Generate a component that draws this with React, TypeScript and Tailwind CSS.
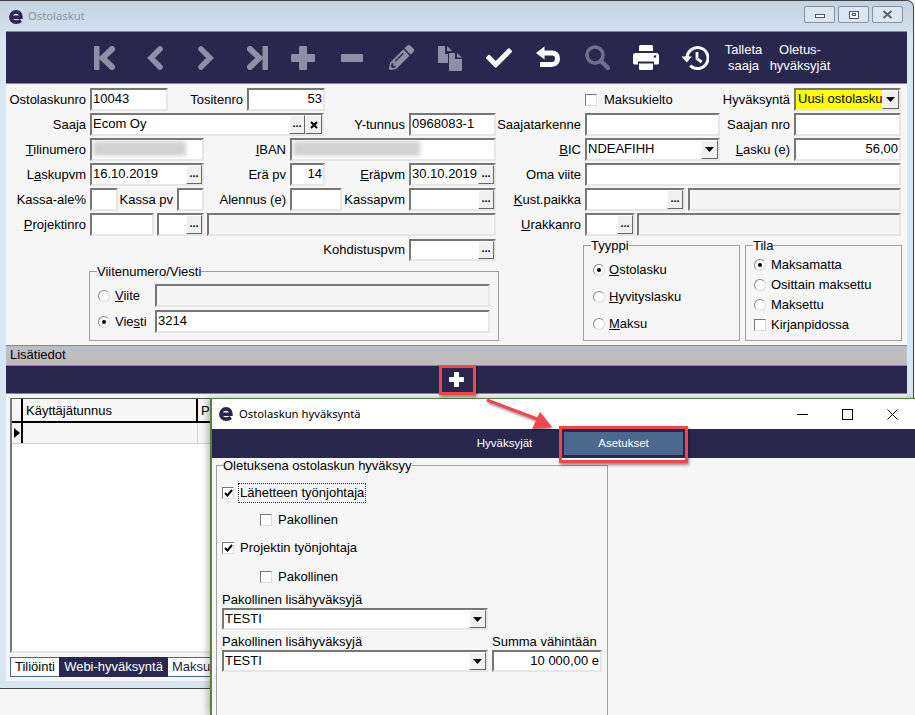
import React from 'react';
import { FaPencilAlt, FaCheck } from 'react-icons/fa';

const sunken = 'border-2 border-t-[#777777] border-l-[#777777] border-r-[#e6e6e6] border-b-[#e6e6e6]';

const Lbl: React.FC<{ className?: string; children?: React.ReactNode }> = ({ className = '', children }) => (
  <div className={`shrink-0 text-right pr-[4px] whitespace-nowrap ${className}`}>{children}</div>
);

const DotsBtn = () => (
  <div className="w-[16px] shrink-0 h-full bg-[#f0f0f0] border border-t-white border-l-white border-r-[#666666] border-b-[#666666] flex items-center justify-center text-[11px] font-bold leading-none pb-[3px]">
    ...
  </div>
);

const CloseBtn = () => (
  <div className="w-[17px] shrink-0 h-full bg-[#f0f0f0] border border-t-white border-l-white border-r-[#666666] border-b-[#666666] flex items-center justify-center">
    <svg width="8" height="8" viewBox="0 0 8 8"><path d="M1 1 L7 7 M7 1 L1 7" stroke="#000" strokeWidth="2" /></svg>
  </div>
);

const ArrowBtn = () => (
  <div className="w-[17px] shrink-0 h-full bg-[#f0f0f0] border border-t-white border-l-white border-r-[#666666] border-b-[#666666] flex items-center justify-center">
    <svg width="9" height="5" viewBox="0 0 9 5"><path d="M0 0 H9 L4.5 5 Z" fill="#000" /></svg>
  </div>
);

const Inp: React.FC<{
  className?: string;
  inner?: string;
  disabled?: boolean;
  right?: boolean;
  children?: React.ReactNode;
  after?: React.ReactNode;
}> = ({ className = '', inner = '', disabled, right, children, after }) => (
  <div className={`flex shrink-0 ${sunken} ${disabled ? 'bg-[#f5f5f5]' : 'bg-white'} ${className}`}>
    <div className={`flex-1 min-w-0 whitespace-nowrap overflow-hidden leading-[17px] ${right ? 'text-right pr-[1px]' : 'pl-[1px]'} ${inner}`}>
      {children}
    </div>
    {after}
  </div>
);

const Blur: React.FC<{ className: string }> = ({ className }) => (
  <div className={`mt-[1px] h-[15px] bg-[#d2d2d2] blur-[2px] ${className}`} />
);

const Radio: React.FC<{ on?: boolean }> = ({ on }) => (
  <div className="w-[12px] h-[12px] shrink-0 rounded-full bg-white border border-t-[#8a8a8a] border-l-[#8a8a8a] border-r-[#dddddd] border-b-[#dddddd] flex items-center justify-center">
    {on && <div className="w-[4px] h-[4px] rounded-full bg-black" />}
  </div>
);

const Check: React.FC<{ on?: boolean }> = ({ on }) => (
  <div className="w-[12px] h-[12px] shrink-0 bg-white border border-t-[#777777] border-l-[#777777] border-r-[#dddddd] border-b-[#dddddd] flex items-center justify-center">
    {on && (
      <svg width="9" height="8" viewBox="0 0 9 8"><path d="M1 4 L3.5 6.5 L8 1" fill="none" stroke="#000" strokeWidth="2" /></svg>
    )}
  </div>
);

const Logo: React.FC<{ className?: string }> = ({ className = '' }) => (
  <svg className={className} viewBox="0 0 14 14">
    <path d="M2.2 7.2 H11.9 C11.9 3.6 9.9 1.9 7.1 1.9 C3.9 1.9 1.9 4.2 1.9 7 C1.9 10 3.9 12.1 7.1 12.1 C8.9 12.1 10.4 11.6 11.9 10.5" fill="none" stroke="#2a274f" strokeWidth="3.6" />
  </svg>
);

const off = '#8f8fa8';

const FirstIcon = () => (
  <svg width="21" height="24" viewBox="0 0 21 24">
    <rect x="0" y="0" width="5.5" height="24" rx="1" fill={off} />
    <path d="M18 3 L8.5 12 L18 21" fill="none" stroke={off} strokeWidth="6" strokeLinecap="round" />
  </svg>
);
const LastIcon = () => (
  <svg width="21" height="24" viewBox="0 0 21 24">
    <rect x="15.5" y="0" width="5.5" height="24" rx="1" fill={off} />
    <path d="M3 3 L12.5 12 L3 21" fill="none" stroke={off} strokeWidth="6" strokeLinecap="round" />
  </svg>
);
const PrevIcon = () => (
  <svg width="16" height="24" viewBox="0 0 16 24"><path d="M13 3 L4 12 L13 21" fill="none" stroke={off} strokeWidth="5.5" strokeLinecap="round" /></svg>
);
const NextIcon = () => (
  <svg width="16" height="24" viewBox="0 0 16 24"><path d="M3 3 L12 12 L3 21" fill="none" stroke={off} strokeWidth="5.5" strokeLinecap="round" /></svg>
);
const PlusIcon: React.FC<{ size?: number; color?: string }> = ({ size = 24, color = off }) => (
  <svg width={size} height={size} viewBox="0 0 24 24" fill={color}>
    <rect x="8" y="0" width="8" height="24" rx="1.2" />
    <rect x="0" y="8" width="24" height="8" rx="1.2" />
  </svg>
);
const MinusIcon = () => (
  <svg width="22" height="8" viewBox="0 0 22 8"><rect width="22" height="8" rx="1.2" fill={off} /></svg>
);
const CopyIcon = () => (
  <svg width="26" height="26" viewBox="0 0 26 26" fill={off}>
    <path d="M1 1 H8 V9 H11 V18 H1 Z" />
    <path d="M10 1 L15 6 H10 Z" />
    <path d="M12 8 H18 V14 H25 V26 H12 Z" />
    <path d="M20 8 L25 12.5 H20 Z" />
  </svg>
);
const UndoIcon = () => (
  <svg width="26" height="24" viewBox="0 0 26 24" fill="none" stroke="#fff">
    <path d="M7 7 H17 C20.5 7 22.5 9.4 22.5 12.5 C22.5 15.6 20.5 18.5 17 18.5 H5" strokeWidth="5" />
    <path d="M9.5 0.5 V13.5 L1 7 Z" fill="#fff" stroke="none" />
  </svg>
);
const SearchIcon = () => (
  <svg width="25" height="25" viewBox="0 0 25 25" fill="none" stroke="#6f6f8c">
    <circle cx="10" cy="10" r="8" strokeWidth="3.6" />
    <path d="M16 16 L23 23" strokeWidth="4.4" strokeLinecap="round" />
  </svg>
);
const PrintIcon = () => (
  <svg width="26" height="25" viewBox="0 0 26 25" fill="#fff">
    <path d="M6 1.5 A1.5 1.5 0 0 1 7.5 0 H18.5 A1.5 1.5 0 0 1 20 1.5 V6 H6 Z" />
    <path d="M2.5 8 H23.5 A2.5 2.5 0 0 1 26 10.5 V18 A1.5 1.5 0 0 1 24.5 19.5 H21 V16.5 H5 V19.5 H1.5 A1.5 1.5 0 0 1 0 18 V10.5 A2.5 2.5 0 0 1 2.5 8 Z" />
    <path d="M6 18.5 H20 V23.5 A1.5 1.5 0 0 1 18.5 25 H7.5 A1.5 1.5 0 0 1 6 23.5 Z" />
    <circle cx="22" cy="11.5" r="1.2" fill="#2a274f" />
  </svg>
);
const HistoryIcon = () => (
  <svg width="28" height="24" viewBox="0 0 28 24" fill="none" stroke="#fff">
    <path d="M6 12 A10.5 10.5 0 1 1 9.2 19.6" strokeWidth="3" />
    <path d="M0.5 10.5 H11 L5.8 16.5 Z" fill="#fff" stroke="none" />
    <path d="M16 6 V12.6 L20.6 16" strokeWidth="2.8" />
  </svg>
);

const navTools: React.ReactNode[] = [<FirstIcon />, <PrevIcon />, <NextIcon />, <LastIcon />];
const tools: React.ReactNode[] = [
  <PlusIcon />,
  <MinusIcon />,
  <FaPencilAlt size={25} color={off} />,
  <CopyIcon />,
  <FaCheck size={26} color="#fff" />,
  <UndoIcon />,
  <SearchIcon />,
  <PrintIcon />,
  <HistoryIcon />,
];

export default function App() {
  return (
    <div className="relative w-[915px] h-[715px] overflow-hidden bg-[#f6f6f6] text-[13px] text-black font-['Liberation_Sans',sans-serif]">
      {/* main window */}
      <div className="w-[914px] h-[689px] flex flex-col border-t border-r border-b border-[#444444] rounded-tr-[7px] pl-[6px] pr-[6px] pb-[7px] bg-gradient-to-b from-[#c3d3e2] to-[#d8e5f2] to-[6%]">
        <div className="h-[30px] shrink-0 flex items-center -ml-[6px] pl-[9px]">
          <Logo className="w-[14px] h-[14px] mt-[1px]" />
          <span className="ml-[5px] mt-[1px] text-[11.25px] text-[#8a97a3] font-['Noto_Sans',sans-serif]">Ostolaskut</span>
          <div className="ml-auto flex gap-[3px] mr-[4px] -mt-[3px]">
            <div className="w-[31px] h-[17px] border border-[#7f94a9] rounded-[2px] bg-[#dbe6f0] flex items-center justify-center">
              <div className="w-[10px] h-[4px] mt-[3px] bg-[#f4f7fa] border border-[#4a5a6a]" />
            </div>
            <div className="w-[31px] h-[17px] border border-[#7f94a9] rounded-[2px] bg-[#dbe6f0] flex items-center justify-center">
              <div className="w-[10px] h-[8px] bg-[#f4f7fa] border border-[#4a5a6a] flex items-center justify-center"><div className="w-[4px] h-[3px] border border-[#4a5a6a]" /></div>
            </div>
            <div className="w-[31px] h-[17px] border border-[#7f94a9] rounded-[2px] bg-[#dbe6f0] flex items-center justify-center">
              <svg width="11" height="9" viewBox="0 0 11 9"><path d="M1.5 1 L9.5 8 M9.5 1 L1.5 8" stroke="#5a6a7a" strokeWidth="2.2" /></svg>
            </div>
          </div>
        </div>

        {/* toolbar */}
        <div className="h-[53px] shrink-0 bg-[#2a274f] border-t border-b border-[#6d8fb0] flex items-center pl-[72.5px] text-white text-[13px] leading-[16px]">
          {navTools.map((t, i) => (
            <div key={i} className="w-[51px] shrink-0 flex items-center justify-center">{t}</div>
          ))}
          <div className="flex shrink-0 -ml-[4px]">
            {tools.map((t, i) => (
              <div key={i} className="w-[49px] shrink-0 flex items-center justify-center">{t}</div>
            ))}
          </div>
          <div className="w-[48px] shrink-0 flex flex-col items-center"><span>Talleta</span><span>saaja</span></div>
          <div className="w-[65px] shrink-0 flex flex-col items-center"><span>Oletus-</span><span className="whitespace-nowrap">hyväksyjät</span></div>
        </div>

        {/* form */}
        <div className="h-[261px] shrink-0 bg-[#f6f6f6] pt-[4px] flex flex-col gap-[2px]">
          <div className="flex items-center h-[23px]">
            <Lbl className="w-[84px]">Ostolaskunro</Lbl>
            <Inp className="w-[78px] h-[23px]">10043</Inp>
            <Lbl className="w-[79px]">Tositenro</Lbl>
            <Inp className="w-[78px] h-[23px]" right>53</Inp>
            <div className="w-[260px] shrink-0" />
            <div className="w-[209px] shrink-0 flex items-center">
              <Check />
              <span className="ml-[7px]">Maksukielto</span>
              <Lbl className="flex-1">Hyväksyntä</Lbl>
            </div>
            <Inp className="w-[107px] h-[23px]" inner="bg-[#ffff00] pl-[2px]" after={<ArrowBtn />}>Uusi ostolasku</Inp>
          </div>

          <div className="flex items-center h-[23px]">
            <Lbl className="w-[84px]">Saaja</Lbl>
            <Inp className="w-[234px] h-[23px]" after={<><DotsBtn /><CloseBtn /></>}>Ecom Oy</Inp>
            <Lbl className="w-[85px]">Y-tunnus</Lbl>
            <Inp className="w-[87px] h-[23px]">0968083-1</Inp>
            <Lbl className="w-[89px]">Saajatarkenne</Lbl>
            <Inp className="w-[135px] h-[23px]" />
            <Lbl className="w-[74px]">Saajan nro</Lbl>
            <Inp className="w-[107px] h-[23px]" />
          </div>

          <div className="flex items-center h-[23px]">
            <Lbl className="w-[84px]"><u>T</u>ilinumero</Lbl>
            <Inp className="w-[114px] h-[23px]"><Blur className="w-[93px]" /></Inp>
            <Lbl className="w-[86px]"><u>I</u>BAN</Lbl>
            <Inp className="w-[206px] h-[23px]"><Blur className="w-[127px]" /></Inp>
            <Lbl className="w-[89px]"><u>B</u>IC</Lbl>
            <Inp className="w-[135px] h-[23px]" after={<ArrowBtn />}>NDEAFIHH</Inp>
            <Lbl className="w-[74px]"><u>L</u>asku (e)</Lbl>
            <Inp className="w-[107px] h-[23px]" right>56,00</Inp>
          </div>

          <div className="flex items-center h-[23px]">
            <Lbl className="w-[84px]">L<u>a</u>skupvm</Lbl>
            <Inp className="w-[114px] h-[23px]" after={<DotsBtn />}>16.10.2019</Inp>
            <Lbl className="w-[86px]">Erä pv</Lbl>
            <Inp className="w-[35px] h-[23px]" right>14</Inp>
            <Lbl className="w-[84px]"><u>E</u>räpvm</Lbl>
            <Inp className="w-[87px] h-[23px]" after={<DotsBtn />}>30.10.2019</Inp>
            <Lbl className="w-[89px]">Oma viite</Lbl>
            <Inp className="w-[316px] h-[23px]" />
          </div>

          <div className="flex items-center h-[23px]">
            <Lbl className="w-[84px]">Kassa-ale%</Lbl>
            <Inp className="w-[28px] h-[23px]" />
            <Lbl className="w-[59px]">Kassa pv</Lbl>
            <Inp className="w-[27px] h-[23px]" />
            <Lbl className="w-[86px]">Alennus (e)</Lbl>
            <Inp className="w-[52px] h-[23px]" />
            <Lbl className="w-[67px]">Kassapvm</Lbl>
            <Inp className="w-[87px] h-[23px]" after={<DotsBtn />} />
            <Lbl className="w-[89px]"><u>K</u>ust.paikka</Lbl>
            <Inp className="w-[100px] h-[23px]" after={<DotsBtn />} />
            <Inp className="w-[213px] h-[23px] ml-[3px]" disabled />
          </div>

          <div className="flex items-center h-[23px]">
            <Lbl className="w-[84px]"><u>P</u>rojektinro</Lbl>
            <Inp className="w-[64px] h-[23px]" />
            <Inp className="w-[47px] h-[23px] ml-[3px]" after={<DotsBtn />} />
            <Inp className="w-[289px] h-[23px] ml-[3px]" disabled />
            <Lbl className="w-[89px]"><u>U</u>rakkanro</Lbl>
            <Inp className="w-[50px] h-[23px]" after={<DotsBtn />} />
            <Inp className="w-[264px] h-[23px] ml-[2px]" disabled />
          </div>

          {/* lower groups */}
          <div className="flex">
            <div className="w-[577px] shrink-0">
              <div className="flex items-center h-[22px] mt-[1px]">
                <Lbl className="w-[403px]">Kohdistuspvm</Lbl>
                <Inp className="w-[87px] h-[22px]" after={<DotsBtn />} />
              </div>
              <fieldset className="ml-[83px] mt-[3px] w-[408px] h-[77px] border border-[#a0a0a0] px-[8px] pt-[5px]">
                <legend className="-ml-[1px] leading-[15px]">Viitenumero/Viesti</legend>
                <div className="flex items-center h-[23px]">
                  <Radio />
                  <span className="ml-[5px] w-[40px]"><u>V</u>iite</span>
                  <Inp className="w-[335px] h-[23px]" disabled />
                </div>
                <div className="flex items-center h-[23px] mt-[3px]">
                  <Radio on />
                  <span className="ml-[5px] w-[40px]">Vie<u>s</u>ti</span>
                  <Inp className="w-[335px] h-[23px]">3214</Inp>
                </div>
              </fieldset>
            </div>
            <fieldset className="w-[157px] h-[103px] border border-[#a0a0a0] pl-[9px] pt-[3px] shrink-0">
              <legend className="-ml-[2px] leading-[15px]">Tyyppi</legend>
              <div className="flex items-center h-[27px]"><Radio on /><span className="ml-[4px]"><u>O</u>stolasku</span></div>
              <div className="flex items-center h-[27px]"><Radio /><span className="ml-[4px]"><u>H</u>yvityslasku</span></div>
              <div className="flex items-center h-[27px]"><Radio /><span className="ml-[4px]"><u>M</u>aksu</span></div>
            </fieldset>
            <fieldset className="w-[157px] h-[103px] ml-[5px] border border-[#a0a0a0] pl-[8px] pt-[2px] shrink-0">
              <legend className="-ml-[1px] leading-[15px]">Tila</legend>
              <div className="flex items-center h-[20px]"><Radio on /><span className="ml-[5px]">Maksamatta</span></div>
              <div className="flex items-center h-[20px]"><Radio /><span className="ml-[5px]">Osittain maksettu</span></div>
              <div className="flex items-center h-[20px]"><Radio /><span className="ml-[5px]">Maksettu</span></div>
              <div className="flex items-center h-[20px]"><Check /><span className="ml-[5px]">Kirjanpidossa</span></div>
            </fieldset>
          </div>
        </div>

        {/* lisätiedot */}
        <div className="h-[20px] shrink-0 bg-[#bebebe] border-t border-[#6d8fb0] pl-[4px] leading-[18px]">Lisätiedot</div>
        <div className="h-[29px] shrink-0 bg-[#2a274f] border-t border-b border-[#6d8fb0] flex items-center justify-center">
          <PlusIcon size={15} color="#fff" />
        </div>

        {/* grid and tabs */}
        <div className="flex-1 bg-[#f6f6f6] pl-[4px] pt-[4px] flex flex-col">
          <div className="h-[255px] w-[400px] bg-white border-l-2 border-[#777777] border-b-2 border-b-[#e6e6e6]">
            <div className="flex h-[25px] bg-[#f6f6f6] border-t border-t-[#555555] border-b-2 border-black">
              <div className="w-[11px] border-r-2 border-black" />
              <div className="w-[175px] border-r-2 border-black pl-[3px] leading-[23px]">Käyttäjätunnus</div>
              <div className="pl-[3px] leading-[23px]">P</div>
            </div>
            <div className="flex h-[21px] bg-[#f6f6f6] border-b border-[#d0d0d0]">
              <div className="w-[11px] border-r-2 border-black flex items-center justify-center">
                <svg width="6" height="10" viewBox="0 0 6 10"><path d="M0 0 L6 5 L0 10 Z" fill="#000" /></svg>
              </div>
              <div className="w-[175px] border-r border-[#d0d0d0]" />
            </div>
          </div>
          <div className="flex h-[20px] mt-[4px]">
            <div className="w-[49px] bg-white border-y border-l border-[#4a6a8d] text-center leading-[18px]">Tiliöinti</div>
            <div className="w-[109px] bg-[#2a274f] text-white text-center leading-[19px]">Webi-hyväksyntä</div>
            <div className="w-[60px] bg-white border-y border-[#4a6a8d] pl-[4px] leading-[18px] text-[#1a1a4a]">Maksu</div>
          </div>
        </div>
      </div>

      {/* approval dialog */}
      <div className="absolute left-[210px] top-[398px] w-[705px] h-[317px] overflow-hidden flex flex-col bg-[#f6f6f6] border-t border-l-2 border-[#5a7f3a] shadow-[-3px_0_6px_rgba(0,0,0,0.25)]">
        <div className="h-[30px] shrink-0 bg-white flex items-center pl-[7px]">
          <Logo className="w-[14px] h-[14px]" />
          <span className="ml-[6px] text-[11.25px] font-['Noto_Sans',sans-serif]">Ostolaskun hyväksyntä</span>
          <div className="ml-auto flex">
            <div className="w-[45px] h-[30px] flex items-center justify-center">
              <svg width="11" height="11" viewBox="0 0 11 11"><path d="M0 5.5 H11" stroke="#000" /></svg>
            </div>
            <div className="w-[45px] h-[30px] flex items-center justify-center">
              <svg width="11" height="11" viewBox="0 0 11 11"><rect x="0.5" y="0.5" width="10" height="10" fill="none" stroke="#000" /></svg>
            </div>
            <div className="w-[45px] h-[30px] flex items-center justify-center">
              <svg width="11" height="11" viewBox="0 0 11 11"><path d="M0.5 0.5 L10.5 10.5 M10.5 0.5 L0.5 10.5" stroke="#000" /></svg>
            </div>
          </div>
        </div>
        <div className="h-[29px] shrink-0 bg-[#2a274f] flex items-center pl-[233px] text-[11.5px] text-white">
          <div className="w-[119px] text-center">Hyväksyjät</div>
          <div className="w-[119px] h-[23px] bg-[#4a6a8d] text-center leading-[23px]">Asetukset</div>
        </div>
        <fieldset className="ml-[4px] w-[392px] h-[300px] shrink-0 border border-[#a0a0a0] pl-[5px]">
          <legend className="ml-[1px] leading-[15px]">Oletuksena ostolaskun hyväksyy</legend>
          <div className="flex items-center h-[20px] mt-[10px]">
            <Check on />
            <span className="ml-[5px] px-[1px] outline-1 outline-dotted outline-[#333333] leading-[18px]">Lähetteen työnjohtaja</span>
          </div>
          <div className="flex items-center h-[20px] mt-[7px] ml-[38px]"><Check /><span className="ml-[6px]">Pakollinen</span></div>
          <div className="flex items-center h-[20px] mt-[8px]"><Check on /><span className="ml-[6px]">Projektin työnjohtaja</span></div>
          <div className="flex items-center h-[20px] mt-[9px] ml-[38px]"><Check /><span className="ml-[6px]">Pakollinen</span></div>
          <div className="mt-[5px] leading-[15px]">Pakollinen lisähyväksyjä</div>
          <Inp className="w-[266px] h-[22px] mt-[1px]" after={<ArrowBtn />}>TESTI</Inp>
          <div className="flex mt-[4px]">
            <div>
              <div className="leading-[15px]">Pakollinen lisähyväksyjä</div>
              <Inp className="w-[266px] h-[22px] mt-[1px]" after={<ArrowBtn />}>TESTI</Inp>
            </div>
            <div className="ml-[4px]">
              <div className="leading-[15px]">Summa vähintään</div>
              <Inp className="w-[110px] h-[22px] mt-[1px]" right>10 000,00 e</Inp>
            </div>
          </div>
        </fieldset>
      </div>

      {/* annotations */}
      <div className="absolute left-[439px] top-[365px] w-[37px] h-[30px] border-[3px] border-[#f3454c] shadow-[1px_2px_3px_rgba(0,0,0,0.45)]" />
      <div className="absolute left-[559px] top-[426px] w-[129px] h-[37px] border-[3px] border-[#f3454c] shadow-[1px_2px_3px_rgba(0,0,0,0.45)]" />
      <svg className="absolute left-[480px] top-[395px] drop-shadow-[1px_2px_1px_rgba(0,0,0,0.4)]" width="80" height="40" viewBox="0 0 80 40">
        <path d="M7 5 L60 25" stroke="#f3454c" strokeWidth="3" />
        <path d="M72 32 L52 34 L60 17 Z" fill="#f3454c" />
      </svg>
    </div>
  );
}
